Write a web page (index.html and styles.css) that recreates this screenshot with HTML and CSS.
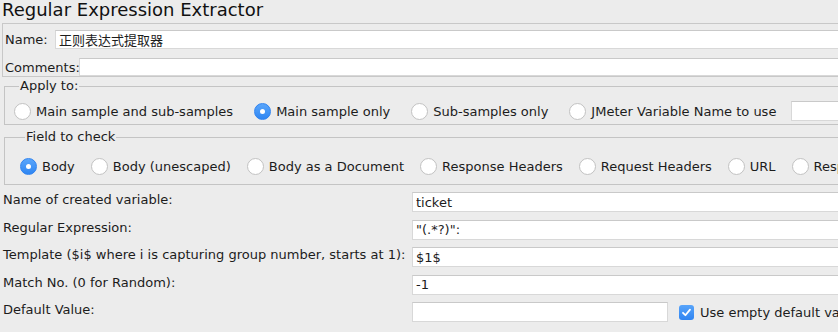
FILE: index.html
```html
<!DOCTYPE html>
<html lang="en">
<head>
    <meta charset="UTF-8">
    <title>Regular Expression Extractor</title>
    <link rel="stylesheet" href="styles.css">
</head>
<body>
    <div class="page">
        <h1 class="title">Regular Expression Extractor</h1>

        <!-- Name / comments -->
        <div class="name-panel">
            <div class="name-row">
                <label class="name-label">Name:</label>
                <input class="field" type="text" value="正则表达式提取器">
            </div>
            <div class="name-row comments-row">
                <label class="comments-label">Comments:</label>
                <input class="field" type="text" value="">
            </div>
        </div>

        <!-- Apply to -->
        <fieldset class="group apply-group">
            <legend>Apply to:</legend>
            <div class="radio-row">
                <label class="radio"><span class="dot"></span>Main sample and sub-samples</label>
                <label class="radio"><span class="dot checked"></span>Main sample only</label>
                <label class="radio"><span class="dot"></span>Sub-samples only</label>
                <label class="radio"><span class="dot"></span>JMeter Variable Name to use</label>
                <input class="field var-name" type="text" value="">
            </div>
        </fieldset>

        <!-- Field to check -->
        <fieldset class="group field-group">
            <legend>Field to check</legend>
            <div class="radio-row">
                <label class="radio"><span class="dot checked"></span>Body</label>
                <label class="radio"><span class="dot"></span>Body (unescaped)</label>
                <label class="radio"><span class="dot"></span>Body as a Document</label>
                <label class="radio"><span class="dot"></span>Response Headers</label>
                <label class="radio"><span class="dot"></span>Request Headers</label>
                <label class="radio"><span class="dot"></span>URL</label>
                <label class="radio"><span class="dot"></span>Response Code</label>
            </div>
        </fieldset>

        <!-- Settings -->
        <div class="settings">
            <label>Name of created variable:</label>
            <input class="field" type="text" value="ticket">

            <label>Regular Expression:</label>
            <input class="field" type="text" value="&quot;(.*?)&quot;:">

            <label>Template ($i$ where i is capturing group number, starts at 1):</label>
            <input class="field" type="text" value="$1$">

            <label>Match No. (0 for Random):</label>
            <input class="field" type="text" value="-1">

            <label>Default Value:</label>
            <div class="default-row">
                <input class="field default-input" type="text" value="">
                <label class="check">
                    <span class="box">
                        <svg width="11" height="11" viewBox="0 0 11 11"><path d="M2 5.8 L4.4 8.2 L9 2.6" fill="none" stroke="#fff" stroke-width="1.8" stroke-linecap="round" stroke-linejoin="round"/></svg>
                    </span>
                    Use empty default value
                </label>
            </div>
        </div>
    </div>
</body>
</html>
```

FILE: styles.css
```css
body {
    margin: 0;
    background: #ececec;
    font-family: "DejaVu Sans", "Noto Sans CJK SC", sans-serif;
    font-size: 13px;
    color: #1c1c1c;
    overflow: hidden;
}
.page {
    width: 1000px;
}
.title {
    margin: 0;
    padding-left: 2px;
    height: 23px;
    font-size: 18px;
    font-weight: normal;
    line-height: 20px;
    color: #111;
}
.field {
    box-sizing: border-box;
    height: 20px;
    margin: 0;
    padding: 0 3px;
    font-family: inherit;
    font-size: 13px;
    color: #1c1c1c;
    background: #fff;
    border: 1px solid #d8d8d8;
    border-top-color: #c9c9c9;
    outline: none;
}

/* name panel */
.name-panel {
    height: 46px;
    margin-left: 2px;
    padding: 6px 0 0 2px;
    border: 1px solid #c8c8c8;
    border-right: none;
}
.name-row {
    display: flex;
    align-items: center;
    height: 19px;
}
.name-row .field {
    flex: 1;
    height: 19px;
}
.comments-row {
    margin-top: 9px;
    height: 18px;
}
.comments-row .field {
    height: 18px;
}
.name-label {
    width: 50px;
}
.comments-label {
    width: 74px;
}

/* titled groups */
.group {
    margin: 0 0 0 4px;
    padding: 0;
    border: 1px solid #c4c4c4;
    border-right: none;
}
.group legend {
    margin-left: 5px;
    padding: 0 1px;
    line-height: 18px;
}
.apply-group {
    padding: 6px 0 3px 9px;
}
.apply-group .radio {
    margin-right: 21px;
}
.field-group {
    margin-top: 3px;
    padding: 10px 0 8px 15px;
}
.radio-row {
    display: flex;
    align-items: center;
    height: 20px;
    white-space: nowrap;
}
.radio {
    display: flex;
    align-items: center;
    margin-right: 16px;
}
.dot {
    box-sizing: border-box;
    width: 17px;
    height: 17px;
    margin-right: 5px;
    border: 1px solid #c2c2c2;
    border-radius: 50%;
    background: #fff;
    position: relative;
}
.dot.checked {
    border-color: #2f83f0;
    background: linear-gradient(#5aa6fb, #2f86f2);
}
.dot.checked:after {
    content: "";
    position: absolute;
    left: 5px;
    top: 5px;
    width: 5px;
    height: 5px;
    border-radius: 50%;
    background: #fff;
}
.var-name {
    width: 120px;
    margin-left: -6px;
    height: 20px;
}

/* settings grid */
.settings {
    display: grid;
    grid-template-columns: 409px 1fr;
    grid-auto-rows: 20px;
    row-gap: 7.5px;
    padding: 7px 0 0 3px;
}
.settings > label {
    line-height: 16px;
    white-space: nowrap;
}
.default-row {
    display: flex;
    align-items: center;
}
.default-input {
    width: 256px;
}
.check {
    display: flex;
    align-items: center;
    margin-left: 11px;
    white-space: nowrap;
}
.box {
    display: flex;
    align-items: center;
    justify-content: center;
    width: 15px;
    height: 15px;
    margin-right: 6px;
    border-radius: 3px;
    background: linear-gradient(#58a4fa, #2f84f1);
}
```
